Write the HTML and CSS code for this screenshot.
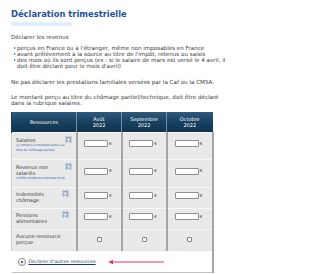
FILE: index.html
```html
<!DOCTYPE html>
<html lang="fr">
<head>
<meta charset="utf-8">
<title>Déclaration trimestrielle</title>
<link rel="stylesheet" href="styles.css">
</head>
<body>
<main class="page">
  <h1 class="title">Déclaration trimestrielle</h1>
  <div class="subbar"></div>
  <p class="lead">Déclarer les revenus</p>
  <ul class="bullets">
    <li><span>perçus en France ou à l'étranger, même non imposables en France</span></li>
    <li><span>avant prélèvement à la source au titre de l'impôt, retenus ou saisis</span></li>
    <li><span>des mois où ils sont perçus (ex : si le salaire de mars est versé le 4 avril, il<br>doit être déclaré pour le mois d'avril)</span></li>
  </ul>
  <p class="note">Ne pas déclarer les prestations familiales versées par la Caf ou la CMSA.</p>
  <p class="note note2">Le montant perçu au titre du chômage partiel/technique, doit être déclaré<br>dans la rubrique salaires.</p>

  <table class="grid">
    <colgroup><col class="c1"><col class="c2"><col class="c3"><col class="c4"></colgroup>
    <thead>
      <tr><th>Ressources</th><th>Août<br>2022</th><th>Septembre<br>2022</th><th>Octobre<br>2022</th></tr>
    </thead>
    <tbody>
      <tr class="r1">
        <td class="label"><div class="lab"><div><div>Salaires</div><div class="sub">(y compris le montant perçu au<br>titre du chômage partiel)</div></div><span class="help">?</span></div></td>
        <td><span class="amt"><input class="inp" type="text">€</span></td>
        <td><span class="amt"><input class="inp" type="text">€</span></td>
        <td><span class="amt"><input class="inp" type="text">€</span></td>
      </tr>
      <tr class="r2">
        <td class="label"><div class="lab"><div><div>Revenus non<br>salariés</div><div class="sub">(chiffre d'affaires mensuel brut)</div></div><span class="help">?</span></div></td>
        <td><span class="amt"><input class="inp" type="text">€</span></td>
        <td><span class="amt"><input class="inp" type="text">€</span></td>
        <td><span class="amt"><input class="inp" type="text">€</span></td>
      </tr>
      <tr class="r3">
        <td class="label"><div class="lab"><div>Indemnités<br>chômage</div><span class="help">?</span></div></td>
        <td><span class="amt"><input class="inp" type="text">€</span></td>
        <td><span class="amt"><input class="inp" type="text">€</span></td>
        <td><span class="amt"><input class="inp" type="text">€</span></td>
      </tr>
      <tr class="r3">
        <td class="label"><div class="lab"><div>Pensions<br>alimentaires</div><span class="help">?</span></div></td>
        <td><span class="amt"><input class="inp" type="text">€</span></td>
        <td><span class="amt"><input class="inp" type="text">€</span></td>
        <td><span class="amt"><input class="inp" type="text">€</span></td>
      </tr>
      <tr class="r3">
        <td class="label"><div class="lab"><div>Aucune ressource<br>perçue</div></div></td>
        <td><input class="chk" type="checkbox"></td>
        <td><input class="chk" type="checkbox"></td>
        <td><input class="chk" type="checkbox"></td>
      </tr>
      <tr class="more">
        <td colspan="4">
          <div class="more-in">
            <span class="radio"><span class="dot"></span></span>
            <a class="link" href="#">Déclarer d'autres ressources</a>
            <svg class="arrow" width="57" height="6" viewBox="0 0 57 6"><line x1="4" y1="3" x2="56" y2="3" stroke="#e8327a" stroke-width="1.1"/><polygon points="0,3 5,0.8 5,5.2" fill="#e8327a"/></svg>
          </div>
        </td>
      </tr>
    </tbody>
  </table>
</main>
</body>
</html>
```

FILE: styles.css
```css
body {
  margin: 0;
  background: #fff;
  font-family: "DejaVu Sans", Verdana, sans-serif;
  color: #3a3a3a;
}
.page {
  width: 220px;
  box-sizing: border-box;
  padding: 7px 4px 0 11px;
}
.title {
  margin: 0;
  font-family: "DejaVu Sans Condensed", "DejaVu Sans", sans-serif;
  font-size: 9.3px;
  line-height: 13px;
  font-weight: bold;
  color: #1d52a0;
  white-space: nowrap;
}
.subbar {
  width: 61px;
  height: 4px;
  margin-top: 2px;
  background: #e2eef9;
}
.lead, .note, .bullets {
  font-size: 5.6px;
  line-height: 6px;
  white-space: nowrap;
}
.lead { margin: 8px 0 0; }
.bullets {
  margin: 5px 0 0;
  padding: 0 0 0 3px;
  list-style: none;
}
.bullets li {
  display: flex;
  align-items: flex-start;
}
.bullets li::before {
  content: "";
  flex: 0 0 auto;
  width: 0;
  height: 0;
  margin: 1.5px 1px 0 0;
  border-left: 2px solid #2a64b5;
  border-top: 1.5px solid transparent;
  border-bottom: 1.5px solid transparent;
}
.note { margin: 10px 0 0; }
.note2 { margin-top: 9px; }

.grid {
  margin-top: 6px;
  width: 201px;
  table-layout: fixed;
  border-collapse: collapse;
  font-size: 5px;
  line-height: 6px;
}
.c1 { width: 65px; }
.c2 { width: 45px; }
.c3 { width: 45px; }
.c4 { width: 46px; }
.grid th {
  height: 20px;
  padding: 0;
  font-size: 5px;
  font-weight: normal;
  color: #fff;
  background: linear-gradient(#2d5a7c, #163d5b 60%, #113450);
  border-left: 1px solid #7591a9;
  text-align: center;
  vertical-align: middle;
}
.grid th:first-child { border-left: 1px solid #1b3f5c; }
.grid td {
  padding: 0 0 3px;
  background: #e9e9e9;
  border-top: 1px solid #f7f7f7;
  border-left: 2px solid #a6a6a6;
  text-align: center;
  vertical-align: middle;
}
.grid td:last-child { border-right: 2px solid #a6a6a6; }
.grid td.label {
  text-align: left;
  padding-left: 4px;
  padding-right: 7px;
  border-left: 1px solid #cfcfcf;
}
.r1 td { height: 23px; }
.r2 td { height: 24px; }
.r3 td { height: 17px; }
.lab {
  display: flex;
  justify-content: space-between;
  align-items: flex-start;
}
.sub {
  font-size: 3.1px;
  line-height: 4.5px;
  color: #2b5fb3;
  white-space: nowrap;
}
.help {
  flex: 0 0 auto;
  width: 7px;
  height: 7px;
  margin-top: -1px;
  background: #98a9c3;
  border: 0.5px solid #c5d0de;
  box-sizing: border-box;
  color: #fff;
  font-size: 6px;
  line-height: 7px;
  font-weight: bold;
  text-align: center;
}
.amt {
  display: inline-flex;
  align-items: center;
  gap: 1px;
  margin-left: -2px;
  font-size: 4px;
  color: #333;
}
.inp {
  width: 24px;
  height: 7px;
  margin: 0;
  padding: 0;
  box-sizing: border-box;
  border: 1px solid #8f8f8f;
  border-radius: 1px;
  background: #fff;
}
.chk {
  appearance: none;
  width: 5px;
  height: 5px;
  margin: 0;
  box-sizing: border-box;
  border: 1px solid #808080;
  border-radius: 1px;
  background: #fff;
  vertical-align: middle;
}
.grid tr.more td {
  height: 21px;
  padding: 0 0 0 6px;
  background: #fff;
  border-left: 0;
  border-top: 1px solid #e4e4e4;
  border-right: 2px solid #a6a6a6;
  border-bottom: 1px solid #c2c2c2;
  text-align: left;
}
.more-in {
  display: flex;
  align-items: center;
}
.radio {
  flex: 0 0 auto;
  width: 8px;
  height: 8px;
  box-sizing: border-box;
  border: 1px solid #8a8a8a;
  border-radius: 50%;
  background: linear-gradient(#fff, #ececec);
  display: flex;
  align-items: center;
  justify-content: center;
}
.dot {
  width: 2px;
  height: 2px;
  border-radius: 50%;
  background: #333;
}
.link {
  margin-left: 3px;
  font-size: 4.7px;
  color: #1f3b6e;
  text-decoration: underline;
  white-space: nowrap;
}
.arrow {
  margin-left: 12px;
  flex: 0 0 auto;
}
```
